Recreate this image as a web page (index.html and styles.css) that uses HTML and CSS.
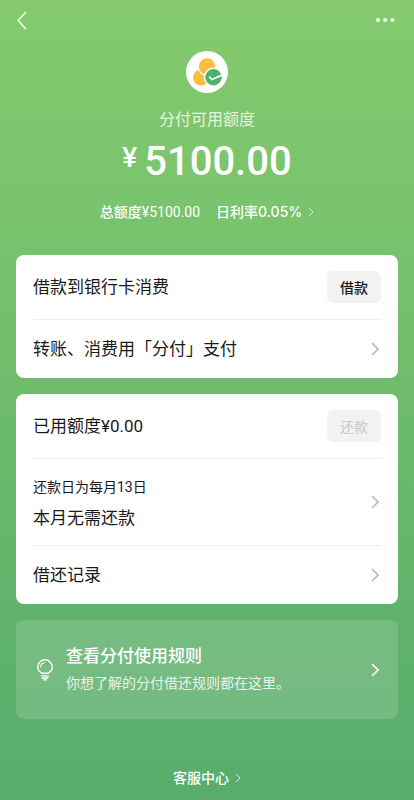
FILE: index.html
```html
<!DOCTYPE html>
<html lang="zh-CN">
<head>
<meta charset="utf-8">
<meta name="viewport" content="width=device-width, initial-scale=1">
<title>分付</title>
<link rel="stylesheet" href="styles.css">
</head>
<body>
<div class="page">
  <header class="nav">
    <button class="nav-button" type="button" aria-label="返回">
      <svg width="12" height="20" viewBox="0 0 12 20"><path class="line" d="M10 2 2 10.500 10 19"/></svg>
    </button>
    <button class="nav-button" type="button" aria-label="更多">
      <svg width="20" height="6" viewBox="0 0 20 6" fill="currentColor"><circle cx="3" cy="3" r="2.100"/><circle cx="10.200" cy="3" r="2.100"/><circle cx="17.400" cy="3" r="2.100"/></svg>
    </button>
  </header>

  <main>
    <section class="summary">
      <svg class="logo" width="42" height="42" viewBox="0 0 42 42" aria-hidden="true">
        <circle cx="21" cy="21" r="21" fill="#fff"/>
        <circle cx="15" cy="26.500" r="8" fill="#fbbd3c"/>
        <circle cx="21" cy="15.500" r="9.500" fill="#fff"/>
        <circle cx="21" cy="15.500" r="8.200" fill="#fbbd3c"/>
        <circle cx="27.500" cy="26.300" r="9.700" fill="#fff"/>
        <circle cx="27.500" cy="26.300" r="8.200" fill="#4eb26b"/>
        <path d="M23 25.700 26 28.600 35.500 24.200" fill="none" stroke="#fff" stroke-width="1.700"/>
      </svg>
      <h1 class="summary-title">分付可用额度</h1>
      <p class="amount"><span class="currency">¥</span>5100.00</p>
      <div class="facts">
        <span>总额度<span class="light">¥5100.00</span></span>
        <a class="more" href="#rate"><span>日利率<span class="rate">0.05%</span></span>
          <svg width="6" height="10" viewBox="0 0 6 10"><path class="line thin" d="M1 1 5 5 1 9"/></svg>
        </a>
      </div>
    </section>

    <section class="card">
      <div class="row tall">
        <span>借款到银行卡消费</span>
        <button class="action" type="button">借款</button>
      </div>
      <a class="row" href="#pay">
        <span>转账、消费用「分付」支付</span>
        <svg class="arrow" width="8" height="14" viewBox="0 0 8 14"><path class="line" d="M1 1 7 7 1 13"/></svg>
      </a>
    </section>

    <section class="card">
      <div class="row tall">
        <span>已用额度¥0.00</span>
        <button class="action" type="button" disabled>还款</button>
      </div>
      <a class="row due" href="#due">
        <span class="stack"><span class="small">还款日为每月13日</span><span>本月无需还款</span></span>
        <svg class="arrow" width="8" height="14" viewBox="0 0 8 14"><path class="line" d="M1 1 7 7 1 13"/></svg>
      </a>
      <a class="row" href="#records">
        <span>借还记录</span>
        <svg class="arrow" width="8" height="14" viewBox="0 0 8 14"><path class="line" d="M1 1 7 7 1 13"/></svg>
      </a>
    </section>

    <a class="card rules" href="#rules">
      <svg class="bulb" width="16" height="22" viewBox="0 0 16 22" fill="none" stroke="currentColor" stroke-width="1.400" stroke-linecap="round">
        <path d="M5 14.200C2.300 12.900.800 10.700.800 8a7.200 7.200 0 0 1 14.400 0c0 2.700-1.500 4.900-4.200 6.200Z" stroke-linejoin="round"/>
        <path d="M3.700 8A4.300 4.300 0 0 1 7.300 3.700" stroke-width="1.100"/>
        <path d="M4.400 16.900h7.200M5.200 19h5.600M6.800 20.900h2.400"/>
      </svg>
      <span class="rules-text"><span class="rules-title">查看分付使用规则</span><span class="small">你想了解的分付借还规则都在这里。</span></span>
      <svg width="8" height="14" viewBox="0 0 8 14"><path class="line" d="M1 1 7 7 1 13"/></svg>
    </a>
  </main>

  <footer class="footer">
    <a class="more" href="#service">客服中心
      <svg width="6" height="10" viewBox="0 0 6 10"><path class="line thin" d="M1 1 5 5 1 9"/></svg>
    </a>
  </footer>
</div>
</body>
</html>
```
FILE: styles.css
```css
* {
  box-sizing: border-box;
}

body {
  margin: 0;
  font-family: Roboto, "Noto Sans CJK SC", sans-serif;
  font-size: 17px;
  line-height: 24px;
  color: #1a1a1a;
}

a {
  color: inherit;
  text-decoration: none;
}

button {
  border: 0;
  font-family: inherit;
  color: inherit;
}

svg {
  display: block;
  flex: none;
}

.line {
  fill: none;
  stroke: currentColor;
  stroke-width: 1.6;
}

.thin {
  stroke-width: 1;
  opacity: 0.7;
}

.page {
  min-height: 100vh;
  display: flex;
  flex-direction: column;
  background: linear-gradient(#85cb6e, #75c16c 35%, #60b26c 78%, #58ad6c);
}

.nav {
  display: flex;
  justify-content: space-between;
  height: 40px;
  padding: 0 15px 0 12px;
  color: #f3fbf0;
}

.nav-button {
  display: flex;
  align-items: center;
  padding: 0 4px;
  background: none;
}

.summary {
  display: flex;
  flex-direction: column;
  align-items: center;
  padding-top: 11px;
  color: #fff;
}

.summary-title {
  margin: 15px 0 0;
  font-size: 16px;
  font-weight: 400;
  opacity: 0.8;
}

.amount {
  display: flex;
  gap: 7px;
  margin: 6px 0 0;
  font-size: 40px;
  font-weight: 500;
  line-height: 48px;
}

.currency {
  font-size: 28px;
  line-height: 40px;
}

.facts {
  display: flex;
  gap: 16px;
  margin: 14px 0 31px;
  font-size: 14px;
  font-weight: 500;
}

.light {
  font-weight: 400;
}

.rate {
  font-family: Inter, sans-serif;
}

.more {
  display: flex;
  align-items: center;
  gap: 6px;
}

.card {
  margin: 0 16px 16px;
  padding: 0 17px;
  border-radius: 8px;
  background: #fff;
}

.row {
  display: flex;
  align-items: center;
  justify-content: space-between;
  min-height: 59px;
}

.row + .row {
  border-top: 1px solid #ededed;
}

.tall {
  min-height: 64px;
}

.due {
  min-height: 87px;
}

.action {
  min-width: 54px;
  height: 32px;
  padding: 0 12px;
  border-radius: 6px;
  background: #f2f2f2;
  font-size: 14px;
  font-weight: 500;
}

.action:disabled {
  color: #c8c8c8;
  font-weight: 400;
}

.arrow {
  margin-right: 2px;
  color: #b8b8b8;
}

.stack {
  display: flex;
  flex-direction: column;
  gap: 7px;
}

.small {
  font-size: 14px;
}

.rules {
  display: flex;
  align-items: center;
  min-height: 99px;
  margin-bottom: 0;
  padding: 0 19px 0 21px;
  background: rgba(255, 255, 255, 0.15);
  color: #fff;
}

.rules-text {
  display: flex;
  flex: 1;
  flex-direction: column;
  gap: 3px;
  margin-left: 13px;
}

.rules-title {
  font-weight: 500;
}

.rules .small {
  opacity: 0.85;
}

.footer {
  display: flex;
  justify-content: center;
  margin-top: auto;
  padding: 16px 0 10px;
  color: #fff;
  font-size: 14px;
  font-weight: 500;
}
```
